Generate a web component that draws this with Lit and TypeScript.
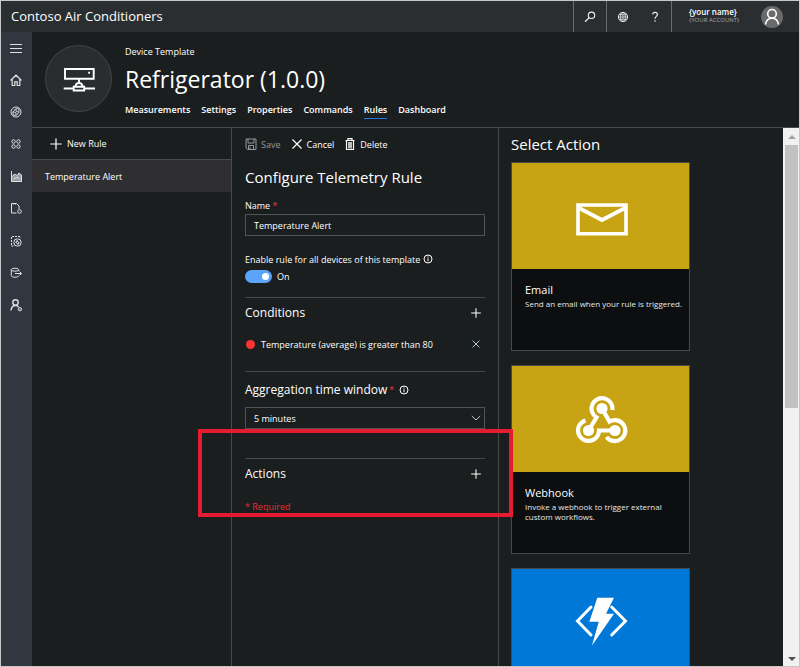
import { LitElement, html, css, svg } from "lit";
import { customElement, property } from "lit/decorators.js";

const icons: Record<string, unknown> = {
  menu: svg`<path d="M2 4.500h12M2 8.500h12M2 12.500h12" stroke-width="1.200"/>`,
  home: svg`<path d="M2.500 8.500 8 3.200l5.500 5.300M4.200 7.500v6h2.600v-3.700h2.400v3.700h2.600v-6" stroke-width="1.200"/>`,
  devices: svg`<circle cx="8" cy="8" r="5"/><circle cx="9.500" cy="6.200" r="1.600"/><circle cx="6.500" cy="9.800" r="1.600"/><path d="M4.500 8.500 8 4.500M8 11.700l3.500-4"/>`,
  sets: svg`<circle cx="5.500" cy="5.500" r="1.700"/><circle cx="10.500" cy="5.500" r="1.700"/><circle cx="5.500" cy="10.500" r="1.700"/><circle cx="10.500" cy="10.500" r="1.700"/>`,
  analytics: svg`<path d="M3.500 8.500 6 6l2.500 2L11 5l2.500 2v6.500h-10z" fill="currentColor" fill-opacity=".6" stroke="none"/><path d="M3.500 3v10.500h10.500M5 8l1.500-2L9 7.500 11 5l2.500 2v6M5.500 11l3-1.500 3 1"/>`,
  jobs: svg`<path d="M8.500 13H3.500V3.500h5l2.500 2.500v3M5.500 3.500v1M7.500 3.500v1"/><circle cx="11.500" cy="11.500" r="1.800"/>`,
  templates: svg`<path d="M5.500 14h-2V4.500h8.500V6" stroke-dasharray="2 1"/><circle cx="9.500" cy="10.500" r="3.700"/><path d="m7.500 10.500 2-2.500M9.500 13l2-2.500"/><circle cx="9.500" cy="10.500" r="1"/>`,
  data: svg`<ellipse cx="7" cy="5.700" rx="3.700" ry="1.500"/><path d="M3.300 5.700v6c0 2 7.400 2 7.400 0M10.700 5.700v1.500M7 9.500h6.500M11.500 7.500l2 2-2 2"/>`,
  admin: svg`<circle cx="7.500" cy="6.500" r="2.700" stroke-width="1.400"/><path d="M3 14.500c.3-3 1.800-5 4.500-5 1.500 0 2.500.6 3.200 1.600" stroke-width="1.400"/><circle cx="11.900" cy="13.200" r="1.700"/><path d="M11.500 13.200h1"/>`,
  search: svg`<circle cx="9.500" cy="6.300" r="3.200" stroke-width="1.100"/><path d="M7.200 8.600 3 12.800" stroke-width="1.300"/>`,
  globe: svg`<circle cx="8" cy="8" r="4.600"/><ellipse cx="8" cy="8" rx="2.300" ry="4.600" stroke-width=".8"/><path d="M3.500 8h9M4.200 5.700h7.600M4.200 10.300h7.600M8 3.500v9" stroke-width=".7"/>`,
  help: svg`<path d="M5.700 5.400C5.800 4 6.800 3.400 8 3.400c1.400 0 2.400.7 2.400 2 0 1.900-2.400 2-2.400 4.300M8 11.300v1.400" stroke-width="1.200"/>`,
  plus: svg`<path d="M8 2.500v11M2.500 8h11" stroke-width="1.200"/>`,
  close: svg`<path d="m3.500 3.500 9 9m0-9-9 9" stroke-width="1.200"/>`,
  save: svg`<path d="M3 3h10v10.500H4.500L3 12zM5 3v4h6V3M5.500 13v-3.500h5V13M7 11v2"/>`,
  trash: svg`<path d="M3.500 4.500h9M6 4V2.700h4V4M4.500 5v8.500h7V5" stroke-width="1.200"/><path d="M6 6h4v6.500H6z" fill="currentColor" fill-opacity=".7" stroke="none"/>`,
  info: svg`<circle cx="8" cy="8" r="4"/><path d="M8 7.300v3M8 5.500v1"/>`,
  chevron: svg`<path d="m3.800 6 4.200 4 4.200-4"/>`,
  email: svg`<path d="M9 18h48v28.800H9z" stroke-width="3.600"/><path d="m9 20.500 24 12.500 24-12.500" stroke-width="3.800"/>`,
  webhook: svg`<g stroke-width="4.200"><path d="M43.400 20A10.500 10.500 0 1 0 27.500 27.500L19.500 40.500"/><path d="M16.500 30.400A10.500 10.500 0 1 0 30 40.500H46"/><path d="M33 18.500 40.500 31.500A10.500 10.500 0 1 1 37.500 47"/></g><g fill="currentColor" stroke="none"><circle cx="33" cy="18.500" r="5.600"/><circle cx="19.500" cy="40.500" r="5.600"/><circle cx="46" cy="40.500" r="5.600"/></g>`,
  func: svg`<path d="M22 14 8.500 28 22 42M42.700 14l13.800 14-13.800 14" stroke-width="3" stroke-linecap="round"/><path d="M28.300 4.700H45l-8 16h8L23 52.500l6.700-23.800h-9.400z" fill="currentColor" stroke="none"/>`,
  fridge: svg`<path d="M10 14h28.700v9.700H10zM24 23.700v4M20 32.700c.3-3 1.500-4.700 4-4.700s3.700 1.700 4 4.700M8.700 33.500h9.500M29.500 33.500H40M18.700 31.800h10.500v3.700H18.700z" stroke-width="1.900"/><path d="M33.200 16.700H35v2h-1.800z" fill="currentColor" stroke="none"/>`,
  person: svg`<circle cx="12" cy="8.800" r="4.300" stroke-width="1.600"/><path d="M5.500 19.500c.6-4 3-6.200 6.500-6.200s5.900 2.200 6.500 6.200" stroke-width="1.600"/>`,
};

const icon = (name: string, box = 16) =>
  html`<svg class="icon i${box}" viewBox="0 0 ${box} ${box}" aria-hidden="true">${icons[name]}</svg>`;

const base = css`
  * { box-sizing: border-box; }
  .icon { display: block; flex: none; fill: none; stroke: currentColor; stroke-width: 1; }
  .i16 { width: 16px; height: 16px; }
  .i24 { width: 24px; height: 24px; }
  .i48 { width: 48px; height: 48px; }
  .i64 { width: 64px; height: 64px; }
  button, input, select { font: inherit; color: inherit; background: none; border: 0; margin: 0; padding: 0; }
  button { display: flex; align-items: center; cursor: pointer; text-align: left; }
  h1, h2, h3, p { margin: 0; font-weight: 400; }
`;

@customElement("top-bar")
class TopBar extends LitElement {
  static styles = [base, css`
    :host { display: flex; height: 31px; background: #2a2e31; flex: none; }
    .brand { flex: 1; padding-left: 10px; font-size: 13px; line-height: 31px; }
    .tools { display: flex; }
    .tool { width: 32px; justify-content: center; color: #f0f0f0; }
    .ruled { border-left: 1px solid #6b6d6f; width: 33px; }
    .account { display: flex; align-items: center; width: 128px; padding: 0 16px 0 17px; border-left: 1px solid #6b6d6f; justify-content: space-between; }
    .name { font-size: 8px; line-height: 8px; font-weight: 600; }
    .org { font-size: 6px; line-height: 8px; color: #a5a7a8; padding-bottom: 2px; }
    .avatar { width: 22px; height: 22px; border-radius: 50%; background: #6a6a6a; justify-content: center; }
  `];
  render() {
    return html`
      <div class="brand">Contoso Air Conditioners</div>
      <div class="tools">
        <button class="tool ruled" aria-label="Search">${icon("search")}</button>
        <button class="tool ruled" aria-label="Language">${icon("globe")}</button>
        <button class="tool" aria-label="Help">${icon("help")}</button>
      </div>
      <div class="account">
        <div><div class="name">{your name}</div><div class="org">{YOUR ACCOUNT}</div></div>
        <button class="avatar" aria-label="Account">${icon("person", 24)}</button>
      </div>`;
  }
}

@customElement("side-nav")
class SideNav extends LitElement {
  static styles = [base, css`
    :host { display: block; width: 31px; flex: none; background: #30373f; }
    nav { display: flex; flex-direction: column; }
    .item { height: 32px; justify-content: center; padding-right: 1px; color: #dfe2e4; }
  `];
  private items = [
    ["menu", "Menu"], ["home", "Home"], ["devices", "Device Explorer"], ["sets", "Device Sets"], ["analytics", "Analytics"],
    ["jobs", "Jobs"], ["templates", "Device Templates"], ["data", "Data Export"], ["admin", "Administration"],
  ];
  render() {
    return html`<nav>${this.items.map(([i, l]) => html`<button class="item" aria-label=${l}>${icon(i)}</button>`)}</nav>`;
  }
}

@customElement("template-header")
class TemplateHeader extends LitElement {
  static styles = [base, css`
    :host { display: flex; height: 96px; flex: none; padding: 13px 13px 0; gap: 13px; border-bottom: 1px solid #47494a; }
    .badge { width: 67px; height: 67px; border-radius: 50%; background: #2a2d30; border: 1px solid #424547; display: flex; align-items: center; justify-content: center; flex: none; }
    .kind { font-size: 9px; line-height: 14px; }
    h1 { font-size: 23px; line-height: 40px; white-space: nowrap; }
    nav { display: flex; gap: 11px; }
    .tab { font-size: 9px; line-height: 16px; font-weight: 600; color: #fff; text-decoration: none; margin-top: 3px; border-bottom: 1px solid transparent; }
    .active { border-color: #2272e8; }
  `];
  private tabs = ["Measurements", "Settings", "Properties", "Commands", "Rules", "Dashboard"];
  render() {
    return html`
      <div class="badge">${icon("fridge", 48)}</div>
      <div>
        <div class="kind">Device Template</div>
        <h1>Refrigerator (1.0.0)</h1>
        <nav>${this.tabs.map((t) => html`<a href="#" class="tab ${t === "Rules" ? "active" : ""}">${t}</a>`)}</nav>
      </div>`;
  }
}

@customElement("rule-list")
class RuleList extends LitElement {
  static styles = [base, css`
    :host { display: block; width: 200px; flex: none; border-right: 1px solid #47494a; font-size: 9px; }
    .new { width: 100%; height: 32px; padding-left: 16px; gap: 3px; border-bottom: 1px solid #47494a; }
    .rule { width: 100%; height: 32px; padding-left: 13px; background: #2f2f32; }
  `];
  render() {
    return html`
      <button class="new">${icon("plus")}New Rule</button>
      <button class="rule">Temperature Alert</button>`;
  }
}

@customElement("rule-form")
class RuleForm extends LitElement {
  static styles = [base, css`
    :host { display: block; width: 267px; flex: none; padding: 0 13px; border-right: 1px solid #47494a; font-size: 9px; }
    .toolbar { display: flex; gap: 8px; height: 32px; margin-left: -2px; }
    .toolbar button { gap: 2px; }
    .toolbar button:disabled { color: #96989a; }
    h2 { font-size: 15px; line-height: 34px; }
    .req { color: #f03a3a; font-size: 9px; }
    .name-label { display: block; line-height: 16px; margin-top: 4px; }
    .field { display: block; width: 100%; height: 22px; padding: 0 8px; border: 1px solid #515354; }
    .enable { display: flex; align-items: center; height: 16px; margin-top: 15px; }
    .toggle-row { display: flex; align-items: center; gap: 5px; height: 14px; margin: 2px 0 14px; }
    .toggle { appearance: none; width: 27px; height: 13px; border-radius: 7px; background: #5ca3fc; display: flex; justify-content: flex-end; align-items: center; padding-right: 3px; }
    .toggle::before { content: ""; width: 7px; height: 7px; border-radius: 50%; background: #fff; }
    .toggle:not(:checked) { justify-content: flex-start; padding-left: 3px; background: #666; }
    section { border-top: 1px solid #47494a; position: relative; }
    .bar { display: flex; align-items: center; justify-content: space-between; height: 29px; padding-right: 1px; margin-bottom: 1px; }
    h3 { font-size: 12px; }
    .condition { display: flex; align-items: center; height: 32px; padding-right: 1px; margin-bottom: 11px; }
    .dot { width: 9px; height: 9px; border-radius: 50%; background: #fb3434; margin: 0 6px 0 1px; }
    .condition .text { flex: 1; }
    .remove { color: #c4e0f2; }
    .remove .icon { padding: 2px; }
    .window { display: flex; align-items: center; gap: 2px; height: 35px; font-size: 12px; }
    .select-wrap { display: grid; margin-bottom: 29px; }
    .select-wrap > * { grid-area: 1 / 1; }
    .select-wrap .icon { justify-self: end; align-self: center; margin-right: 1px; pointer-events: none; color: #c0c2c3; }
    select { appearance: none; }
    .bar .icon { padding: 1px; }
    .required { color: #f02a2a; line-height: 16px; margin-top: 11px; }
    .highlight { position: absolute; z-index: 2; inset: -30px -28px -2px -47px; border: 4px solid #e51b31; pointer-events: none; }
  `];
  render() {
    return html`
      <div class="toolbar">
        <button disabled>${icon("save")}Save</button>
        <button>${icon("close")}Cancel</button>
        <button>${icon("trash")}Delete</button>
      </div>
      <h2>Configure Telemetry Rule</h2>
      <label class="name-label" for="name">Name <span class="req">*</span></label>
      <input class="field" id="name" .value=${"Temperature Alert"} />
      <label class="enable" for="enabled">Enable rule for all devices of this template ${icon("info")}</label>
      <div class="toggle-row"><input class="toggle" id="enabled" type="checkbox" role="switch" checked /><span>On</span></div>
      <section>
        <div class="bar"><h3>Conditions</h3><button aria-label="Add condition">${icon("plus")}</button></div>
        <div class="condition">
          <span class="dot"></span><span class="text">Temperature (average) is greater than 80</span>
          <button class="remove" aria-label="Remove condition">${icon("close")}</button>
        </div>
      </section>
      <section>
        <label class="window" for="window">Aggregation time window <span class="req">*</span>${icon("info")}</label>
        <div class="select-wrap">
          <select class="field" id="window"><option>5 minutes</option></select>
          ${icon("chevron")}
        </div>
      </section>
      <section>
        <div class="bar"><h3>Actions</h3><button aria-label="Add action">${icon("plus")}</button></div>
        <p class="required">* Required</p>
        <div class="highlight"></div>
      </section>`;
  }
}

@customElement("action-card")
class ActionCard extends LitElement {
  @property() glyph = "";
  @property() heading = "";
  @property() text = "";
  @property({ reflect: true }) tone = "gold";
  static styles = [base, css`
    :host { display: block; width: 179px; flex: none; }
    .card { width: 100%; height: 189px; border: 1px solid #474a4b; background: #0c0e0f; flex-direction: column; align-items: stretch; justify-content: flex-start; }
    .art { display: flex; height: 106px; flex: none; align-items: center; justify-content: center; padding-top: 6px; background: #c8a414; color: #fff; }
    :host([tone="blue"]) .art { background: #0078d7; }
    .copy { display: block; padding: 13px 3px 0 13px; font-size: 8px; line-height: 10px; }
    .title { display: block; font-size: 11px; line-height: 16px; margin-bottom: 1px; }
    .text { display: block; color: #e8e8e8; }
  `];
  render() {
    return html`<button class="card">
      <span class="art">${icon(this.glyph, 64)}</span>
      <span class="copy"><span class="title">${this.heading}</span><span class="text">${this.text}</span></span>
    </button>`;
  }
}

@customElement("action-panel")
class ActionPanel extends LitElement {
  static styles = [base, css`
    :host { display: flex; flex: 1; min-width: 0; }
    .list { flex: 1; min-width: 0; overflow-y: auto; scrollbar-width: none; padding-left: 12px; display: flex; flex-direction: column; gap: 14px; }
    h2 { font-size: 15px; line-height: 32px; margin-bottom: -12px; flex: none; }
    .scroll { width: 16px; flex: none; background: #f1f1f1; display: flex; flex-direction: column; align-items: center; padding: 7px 1px 5px 2px; }
    .up { border: 4px solid transparent; border-top: 0; border-bottom-color: #a3a3a3; margin-bottom: 6px; }
    .thumb { width: 100%; height: 50%; background: #c1c1c1; margin-bottom: auto; }
    .down { border: 4px solid transparent; border-bottom: 0; border-top-color: #505050; }
  `];
  render() {
    return html`
      <div class="list">
        <h2>Select Action</h2>
        <action-card glyph="email" heading="Email" text="Send an email when your rule is triggered."></action-card>
        <action-card glyph="webhook" heading="Webhook" text="Invoke a webhook to trigger external custom workflows."></action-card>
        <action-card glyph="func" tone="blue"></action-card>
      </div>
      <div class="scroll" aria-hidden="true"><span class="up"></span><span class="thumb"></span><span class="down"></span></div>`;
  }
}

@customElement("app-root")
class AppRoot extends LitElement {
  static styles = [base, css`
    :host { display: flex; flex-direction: column; height: 100vh; box-sizing: border-box; overflow: hidden; border: 1px solid #c4c8c6; background: #1b1e1f; color: #fff; font-family: "Open Sans", "Noto Sans", sans-serif; }
    .body { display: flex; flex: 1; min-height: 0; }
    main { display: flex; flex-direction: column; flex: 1; min-width: 0; }
    .columns { display: flex; flex: 1; min-height: 0; }
  `];
  render() {
    return html`
      <top-bar></top-bar>
      <div class="body">
        <side-nav></side-nav>
        <main>
          <template-header></template-header>
          <div class="columns"><rule-list></rule-list><rule-form></rule-form><action-panel></action-panel></div>
        </main>
      </div>`;
  }
}
